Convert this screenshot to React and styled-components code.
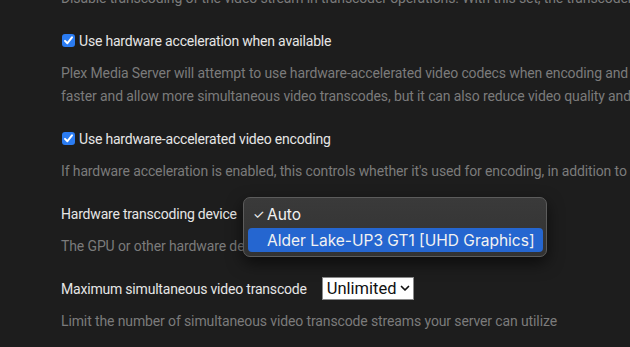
import styled, { createGlobalStyle } from "styled-components";

const GlobalStyle = createGlobalStyle`
    html, body {
        margin: 0;
        padding: 0;
        background: #1d1d1d;
        overflow: hidden;
    }
    body {
        width: 630px;
        height: 347px;
        font-family: Roboto, "Noto Sans", "Liberation Sans", sans-serif;
        -webkit-font-smoothing: antialiased;
    }
`

const Page = styled.main`
    display: flex;
    flex-direction: column;
    gap: 19px;
    padding-left: 61px;
    width: 569px;
    overflow: hidden;
`

const Group = styled.section`
    display: flex;
    flex-direction: column;
    gap: 10px;
`

const Row = styled.div`
    display: flex;
    align-items: center;
    gap: ${props => props.$gap || 0}px;
    height: 23px;
    position: relative;
`

const Label = styled.span`
    color: #e6e6e6;
    font-size: 14px;
    letter-spacing: -0.2px;
    white-space: nowrap;
`

const Description = styled.p`
    margin: ${props => props.$clipped ? "-13px 0 0" : "0"};
    color: #7b7b7b;
    font-size: 14px;
    letter-spacing: -0.12px;
    line-height: 23px;
    white-space: nowrap;
`

const Checkbox = styled.span`
    display: flex;
    align-items: center;
    justify-content: center;
    width: 13px;
    height: 13px;
    margin-left: 1px;
    border-radius: 3px;
    background: #2b7cf2;
    flex-shrink: 0;
`

const SelectBox = styled.div`
    display: flex;
    align-items: center;
    gap: 3px;
    height: 21px;
    padding: 0 3px 0 4px;
    background: #ffffff;
    border: 1px solid #8a8a8a;
    color: #111;
    font-size: 16.5px;
`

const Popup = styled.ul`
    position: absolute;
    left: 182px;
    top: -5px;
    width: 295px;
    margin: 0;
    padding: 4px 3px 4px 4px;
    list-style: none;
    background: linear-gradient(#3a3a3a, #323232);
    border: 1px solid #5c5c5c;
    border-radius: 7px;
    box-shadow: 0 6px 16px rgba(0, 0, 0, 0.6);
    z-index: 2;
`

const Option = styled.li`
    display: flex;
    align-items: center;
    height: 24px;
    margin-top: ${props => props.$active ? "2px" : "0"};
    padding-left: 5px;
    border-radius: 4px;
    background: ${props => props.$active ? "#2566d0" : "transparent"};
    color: #f2f2f2;
    font-family: Inter, Roboto, sans-serif;
    font-size: 15.5px;
    white-space: nowrap;

    .mark {
        width: 14px;
        font-size: 13px;
    }
`

function Check() {
    return (
        <svg width="11" height="11" viewBox="0 0 12 12">
            <path d="M2.2 6.4 L4.8 9 L9.8 2.6" fill="none" stroke="#fff" strokeWidth="2.2" strokeLinecap="round" strokeLinejoin="round" />
        </svg>
    )
}

function Chevron() {
    return (
        <svg width="10" height="7" viewBox="0 0 10 7">
            <path d="M1.5 1.5 L5 5 L8.5 1.5" fill="none" stroke="#111" strokeWidth="1.7" strokeLinecap="round" strokeLinejoin="round" />
        </svg>
    )
}

export default function App() {
    return (
        <>
        <GlobalStyle />
        <Page>
            <Group>
                <Description $clipped>
                    Disable transcoding of the video stream in transcoder operations. With this set, the transcoder will only handle audio.
                </Description>
            </Group>
            <Group>
                <Row $gap={4}>
                    <Checkbox><Check /></Checkbox>
                    <Label>Use hardware acceleration when available</Label>
                </Row>
                <Description>
                    Plex Media Server will attempt to use hardware-accelerated video codecs when encoding and decoding video. Hardware acceleration can make transcoding
                    <br />
                    faster and allow more simultaneous video transcodes, but it can also reduce video quality and compatibility.
                </Description>
            </Group>
            <Group>
                <Row $gap={4}>
                    <Checkbox><Check /></Checkbox>
                    <Label>Use hardware-accelerated video encoding</Label>
                </Row>
                <Description>
                    If hardware acceleration is enabled, this controls whether it's used for encoding, in addition to decoding.
                </Description>
            </Group>
            <Group>
                <Row $gap={10}>
                    <Label>Hardware transcoding device</Label>
                    <SelectBox>Auto<Chevron /></SelectBox>
                    <Popup>
                        <Option><span className="mark">✓</span>Auto</Option>
                        <Option $active><span className="mark"></span>Alder Lake-UP3 GT1 [UHD Graphics]</Option>
                    </Popup>
                </Row>
                <Description>
                    The GPU or other hardware device that will be used for transcoding.
                </Description>
            </Group>
            <Group>
                <Row $gap={15}>
                    <Label>Maximum simultaneous video transcode</Label>
                    <SelectBox>Unlimited<Chevron /></SelectBox>
                </Row>
                <Description>
                    Limit the number of simultaneous video transcode streams your server can utilize
                </Description>
            </Group>
        </Page>
        </>
    )
}
